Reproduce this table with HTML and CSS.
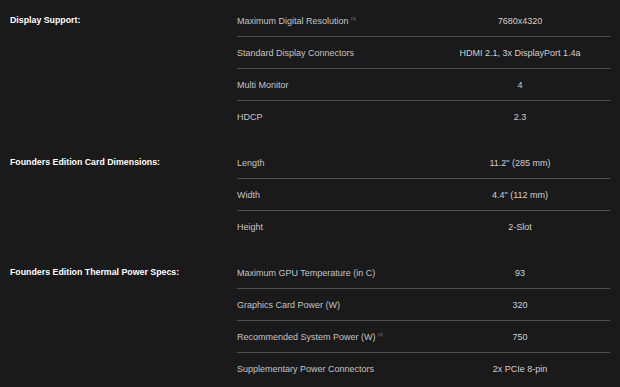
FILE: index.html
```html
<!DOCTYPE html>
<html lang="en">
<head>
    <meta charset="UTF-8">
    <meta name="viewport" content="width=device-width, initial-scale=1.0">
    <title>Specs</title>
    <link rel="stylesheet" href="styles.css">
</head>
<body>
    <div class="specs">
        <!-- Display -->
        <section class="spec-group">
            <h3 class="group-title">Display Support:</h3>
            <div class="spec-rows">
                <div class="spec-row">
                    <span class="spec-name">Maximum Digital Resolution <sup>(1)</sup></span>
                    <span class="spec-value">7680x4320</span>
                </div>
                <div class="spec-row">
                    <span class="spec-name">Standard Display Connectors</span>
                    <span class="spec-value">HDMI 2.1, 3x DisplayPort 1.4a</span>
                </div>
                <div class="spec-row">
                    <span class="spec-name">Multi Monitor</span>
                    <span class="spec-value">4</span>
                </div>
                <div class="spec-row">
                    <span class="spec-name">HDCP</span>
                    <span class="spec-value">2.3</span>
                </div>
            </div>
        </section>

        <!-- Dimensions -->
        <section class="spec-group">
            <h3 class="group-title">Founders Edition Card Dimensions:</h3>
            <div class="spec-rows">
                <div class="spec-row">
                    <span class="spec-name">Length</span>
                    <span class="spec-value">11.2" (285 mm)</span>
                </div>
                <div class="spec-row">
                    <span class="spec-name">Width</span>
                    <span class="spec-value">4.4" (112 mm)</span>
                </div>
                <div class="spec-row">
                    <span class="spec-name">Height</span>
                    <span class="spec-value">2-Slot</span>
                </div>
            </div>
        </section>

        <!-- Thermal / power -->
        <section class="spec-group">
            <h3 class="group-title">Founders Edition Thermal Power Specs:</h3>
            <div class="spec-rows">
                <div class="spec-row">
                    <span class="spec-name">Maximum GPU Temperature (in C)</span>
                    <span class="spec-value">93</span>
                </div>
                <div class="spec-row">
                    <span class="spec-name">Graphics Card Power (W)</span>
                    <span class="spec-value">320</span>
                </div>
                <div class="spec-row">
                    <span class="spec-name">Recommended System Power (W) <sup>(2)</sup></span>
                    <span class="spec-value">750</span>
                </div>
                <div class="spec-row">
                    <span class="spec-name">Supplementary Power Connectors</span>
                    <span class="spec-value">2x PCIe 8-pin</span>
                </div>
            </div>
        </section>
    </div>
</body>
</html>
```

FILE: styles.css
```css
body {
    margin: 0;
    background-color: #1a1a1a;
    font-family: 'Liberation Sans', Arial, sans-serif;
    color: #c4c4c4;
}

.specs {
    padding: 5px 10px 0 10px;
}

.spec-group {
    display: grid;
    grid-template-columns: 227px 373px;
    margin-bottom: 14px;
}

.group-title {
    margin: 0;
    padding-top: 10px;
    font-size: 8.8px;
    font-weight: bold;
    color: #ffffff;
    line-height: 11px;
}

.spec-row {
    display: grid;
    grid-template-columns: 193px 180px;
    align-items: center;
    height: 31px;
    border-bottom: 1px solid #505050;
    font-size: 9px;
}

.spec-row:last-child {
    border-bottom-color: transparent;
}

.spec-value {
    text-align: center;
    color: #d0d0d0;
}

.spec-name sup {
    font-size: 4px;
    vertical-align: 4px;
    color: #999;
}
```
